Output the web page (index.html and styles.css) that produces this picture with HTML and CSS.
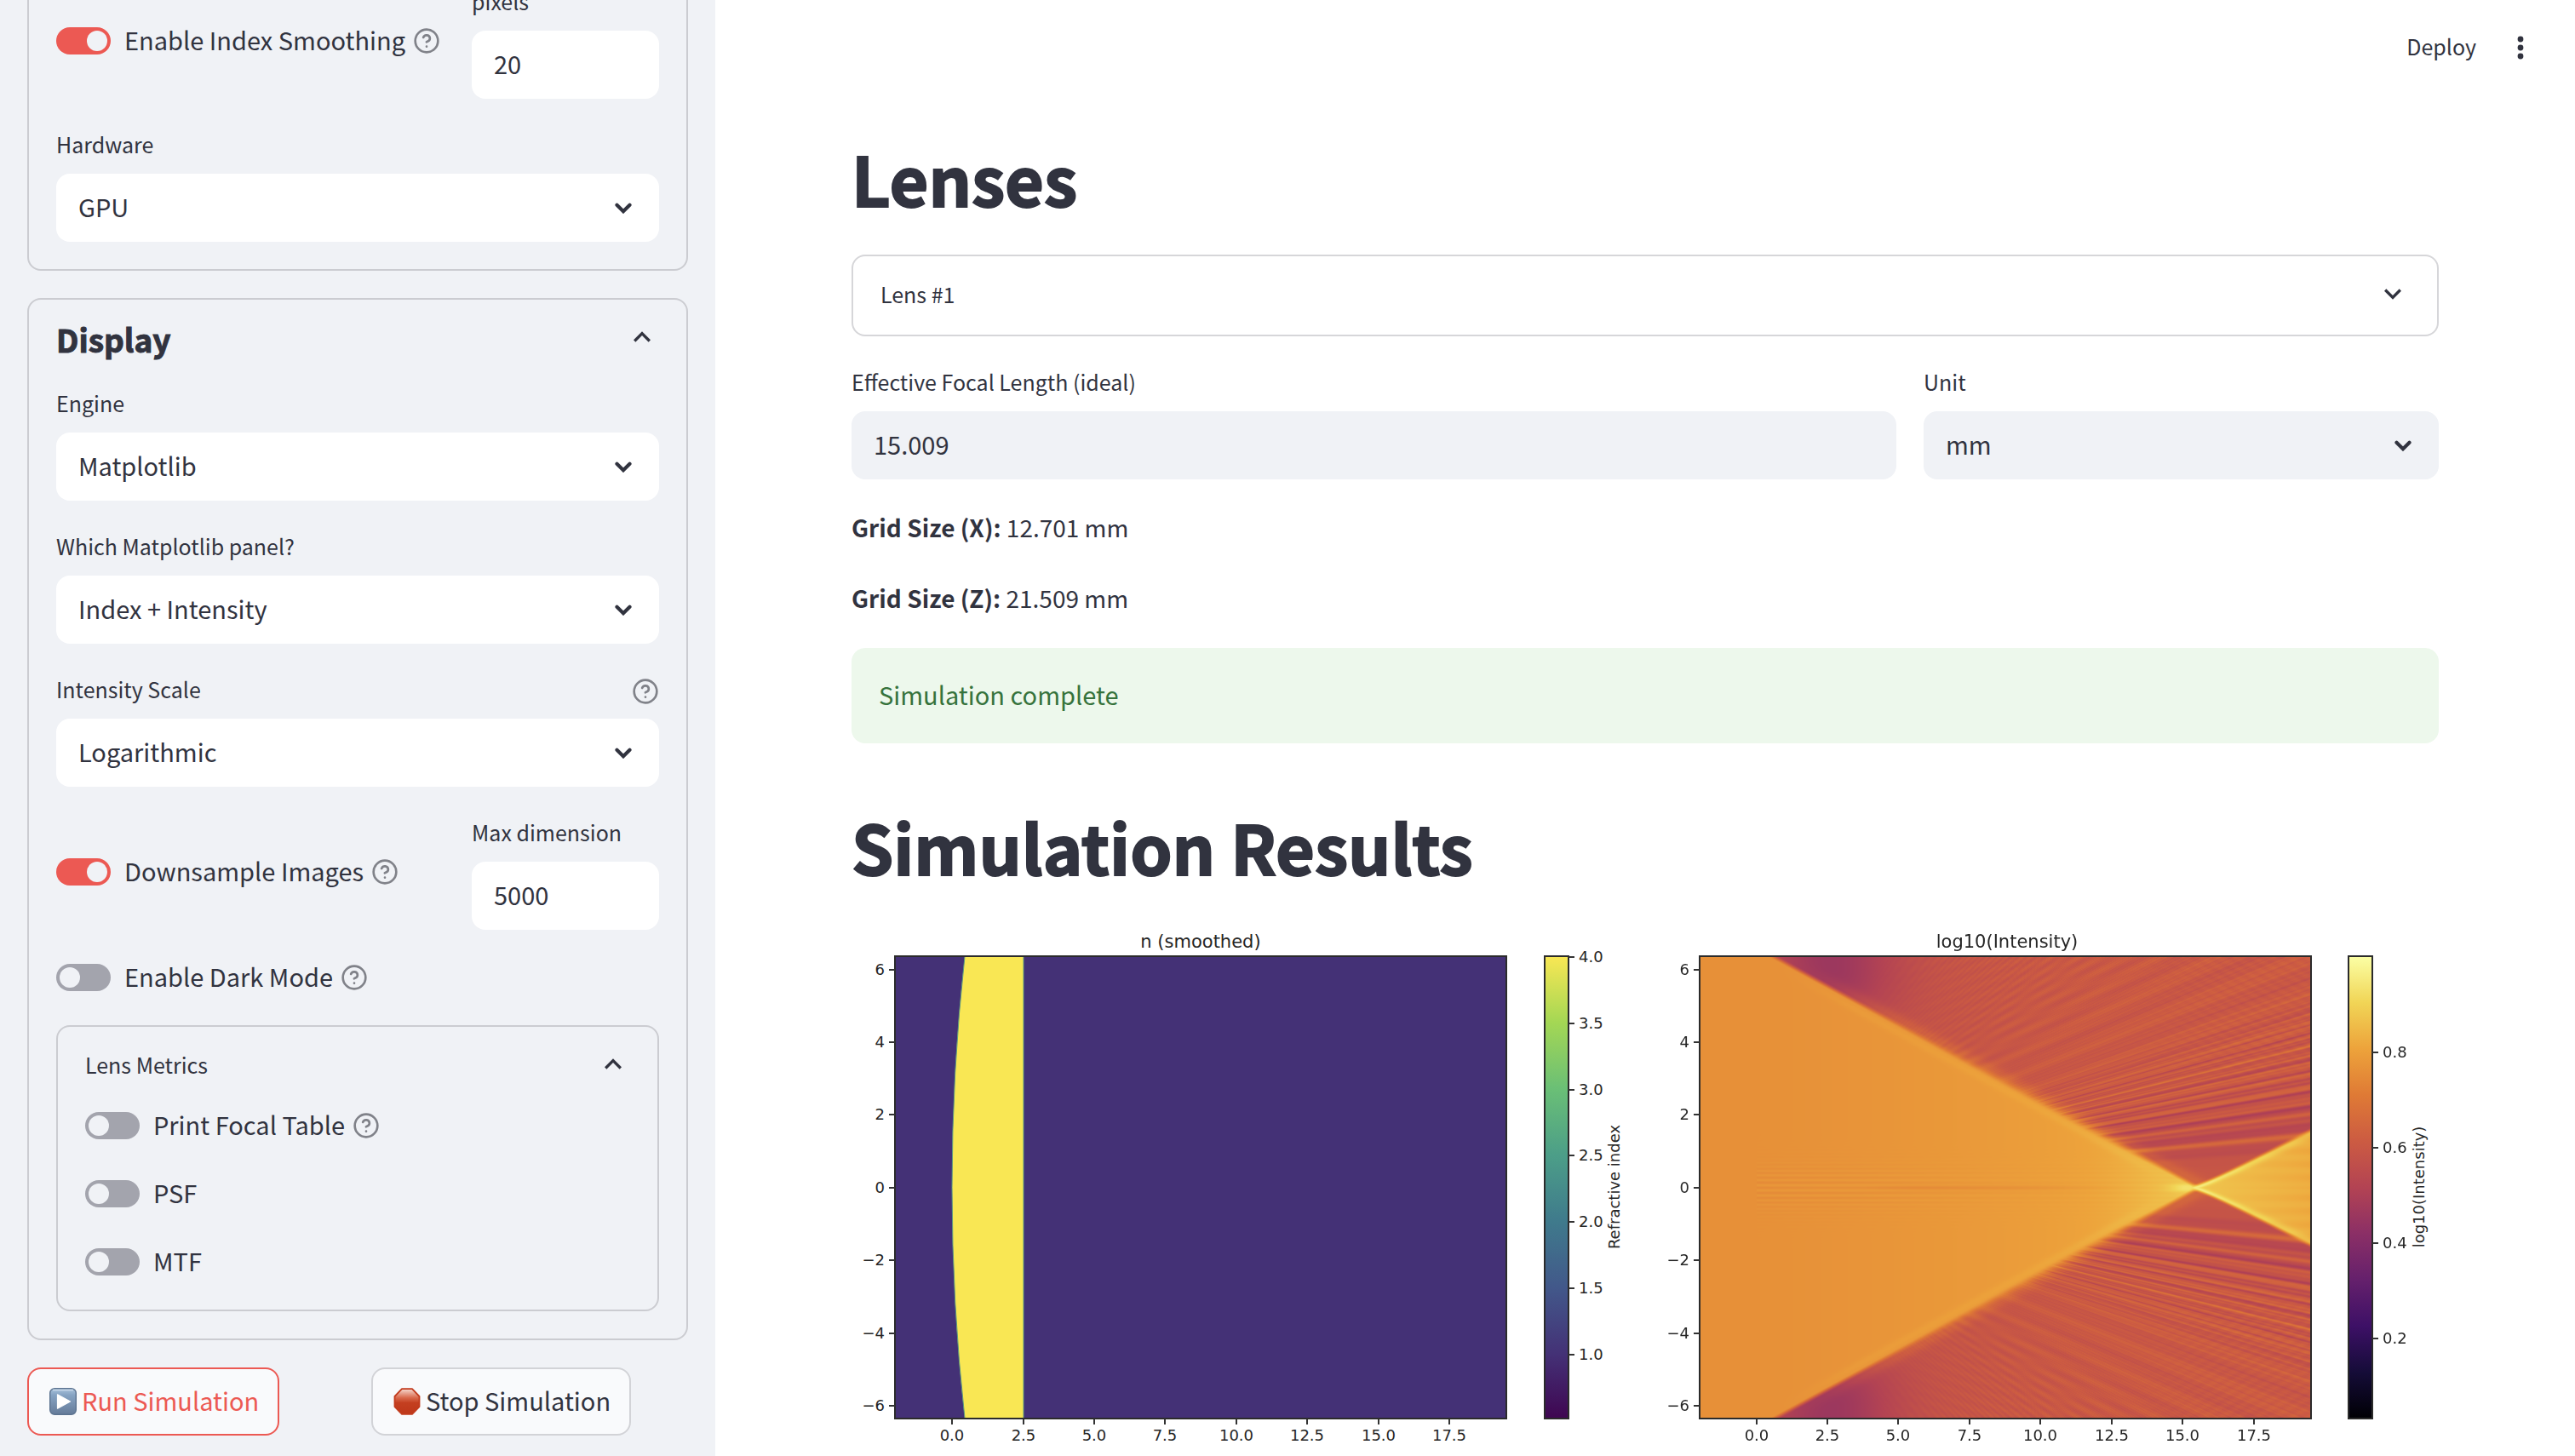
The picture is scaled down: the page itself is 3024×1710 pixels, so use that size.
FILE: index.html
```html
<!DOCTYPE html>
<html lang="en">
<head>
<meta charset="utf-8">
<title>Lens Simulation</title>
<link rel="stylesheet" href="styles.css">
</head>
<body>
<svg class="sprite" aria-hidden="true">
  <symbol id="help" viewBox="0 0 24 24"><g fill="none" stroke="#808289" stroke-width="2" stroke-linecap="round" stroke-linejoin="round"><circle cx="12" cy="12" r="10"/><path d="M9.09 9a3 3 0 0 1 5.83 1c0 2-3 3-3 3"/><path d="M12 17h.01"/></g></symbol>
  <symbol id="caret" viewBox="0 0 20 13"><path d="M2.5 2.8L10 10.2l7.500-7.400" fill="none" stroke="#31333f" stroke-width="4.200" stroke-linecap="round" stroke-linejoin="miter"/></symbol>
  <symbol id="down" viewBox="0 0 24 24"><path fill="#31333f" d="M16.590 8.590L12 13.170 7.410 8.590 6 10l6 6 6-6z"/></symbol>
  <symbol id="up" viewBox="0 0 24 24"><path fill="#31333f" d="M12 8l-6 6 1.410 1.410L12 10.830l4.590 4.580L18 14z"/></symbol>
</svg>
<div class="app">
  <aside class="sidebar">
    <section class="card">
      <div class="split">
        <div class="toggle"><input type="checkbox" id="smooth" checked><label for="smooth">Enable Index Smoothing</label><svg class="help"><use href="#help"/></svg></div>
        <div class="field"><label for="pixels">pixels</label><input class="box" type="text" id="pixels" value="20"></div>
      </div>
      <div class="field"><label for="hardware">Hardware</label>
        <div class="select"><select class="box" id="hardware"><option>GPU</option></select><svg class="caret"><use href="#caret"/></svg></div></div>
    </section>

    <section class="card">
      <button class="head head-big" type="button"><span>Display</span><svg class="chevron"><use href="#up"/></svg></button>
      <div class="field"><label for="engine">Engine</label>
        <div class="select"><select class="box" id="engine"><option>Matplotlib</option></select><svg class="caret"><use href="#caret"/></svg></div></div>
      <div class="field"><label for="panel">Which Matplotlib panel?</label>
        <div class="select"><select class="box" id="panel"><option>Index + Intensity</option></select><svg class="caret"><use href="#caret"/></svg></div></div>
      <div class="field"><div class="label-row"><label for="scale">Intensity Scale</label><svg class="help"><use href="#help"/></svg></div>
        <div class="select"><select class="box" id="scale"><option>Logarithmic</option></select><svg class="caret"><use href="#caret"/></svg></div></div>
      <div class="split">
        <div class="toggle"><input type="checkbox" id="down-images" checked><label for="down-images">Downsample Images</label><svg class="help"><use href="#help"/></svg></div>
        <div class="field"><label for="maxdim">Max dimension</label><input class="box" type="text" id="maxdim" value="5000"></div>
      </div>
      <div class="toggle"><input type="checkbox" id="dark"><label for="dark">Enable Dark Mode</label><svg class="help"><use href="#help"/></svg></div>
      <section class="card">
        <button class="head" type="button"><span>Lens Metrics</span><svg class="chevron"><use href="#up"/></svg></button>
        <div class="toggle"><input type="checkbox" id="focal"><label for="focal">Print Focal Table</label><svg class="help"><use href="#help"/></svg></div>
        <div class="toggle"><input type="checkbox" id="psf"><label for="psf">PSF</label></div>
        <div class="toggle"><input type="checkbox" id="mtf"><label for="mtf">MTF</label></div>
      </section>
    </section>

    <div class="actions">
      <div><button class="action action-run" type="button">
        <svg class="emoji" viewBox="0 0 32 32"><defs><linearGradient id="blue" x1="0" y1="0" x2="0" y2="1"><stop offset="0" stop-color="#a9c3dc"/><stop offset=".25" stop-color="#86a3c3"/><stop offset="1" stop-color="#657b99"/></linearGradient></defs><rect x=".7" y=".7" width="30.600" height="30.600" rx="5.500" fill="url(#blue)" stroke="#5c7390" stroke-width="1.400"/><path d="M4 2.500h24" stroke="#dfeaf5" stroke-width="1.500" opacity=".7"/><path d="M9.500 7.800v16.400L24.500 16z" fill="#fff" stroke="#fff" stroke-width="1.200" stroke-linejoin="round"/></svg>
        <span>Run Simulation</span></button></div>
      <div><button class="action" type="button">
        <svg class="emoji" viewBox="0 0 32 32"><defs><linearGradient id="red" x1="0" y1="0" x2="0" y2="1"><stop offset="0" stop-color="#f6d9d0"/><stop offset=".35" stop-color="#d9694c"/><stop offset=".55" stop-color="#c43f20"/><stop offset="1" stop-color="#be371a"/></linearGradient></defs><path d="M10 1.200h12L30.500 10v12L22 30.800H10L1.500 22V10z" fill="url(#red)" stroke="#c23b1d" stroke-width="1.800" stroke-linejoin="round"/></svg>
        <span>Stop Simulation</span></button></div>
    </div>
  </aside>

  <main class="main">
    <header class="topbar">
      <button class="deploy" type="button">Deploy</button>
      <button class="menu" type="button" aria-label="Menu"><svg class="dots" viewBox="0 0 8 28"><g fill="#31333f"><circle cx="4" cy="4" r="3.400"/><circle cx="4" cy="14" r="3.400"/><circle cx="4" cy="24" r="3.400"/></g></svg></button>
    </header>
    <div class="content">
      <h1>Lenses</h1>
      <section class="card card-closed"><button class="head" type="button"><span>Lens #1</span><svg class="chevron"><use href="#down"/></svg></button></section>
      <div class="lens-row">
        <div class="field"><label for="efl">Effective Focal Length (ideal)</label><input class="box" type="text" id="efl" value="15.009"></div>
        <div class="field"><label for="unit">Unit</label>
          <div class="select"><select class="box" id="unit"><option>mm</option></select><svg class="caret"><use href="#caret"/></svg></div></div>
      </div>
      <p><strong>Grid Size (X):</strong> 12.701 mm</p>
      <p><strong>Grid Size (Z):</strong> 21.509 mm</p>
      <div class="alert" role="status">Simulation complete</div>
      <h1>Simulation Results</h1>
      <svg class="figure" viewBox="0 0 1864 632">
        <defs>
          <linearGradient id="viridis" x1="0" y1="1" x2="0" y2="0"><stop offset="0" stop-color="#3f0651"/><stop offset=".139" stop-color="#443176"/><stop offset=".283" stop-color="#42588a"/><stop offset=".426" stop-color="#3f7a8c"/><stop offset=".57" stop-color="#4c9e88"/><stop offset=".713" stop-color="#6abf76"/><stop offset=".857" stop-color="#a4d754"/><stop offset="1" stop-color="#f9e754"/></linearGradient>
          <linearGradient id="inferno" x1="0" y1="1" x2="0" y2="0"><stop offset="0" stop-color="#000004"/><stop offset=".1" stop-color="#150c38"/><stop offset=".2" stop-color="#3d1066"/><stop offset=".3" stop-color="#65206c"/><stop offset=".4" stop-color="#8b2f66"/><stop offset=".5" stop-color="#b34353"/><stop offset=".6" stop-color="#cc5b42"/><stop offset=".7" stop-color="#df7a35"/><stop offset=".8" stop-color="#eda33b"/><stop offset=".9" stop-color="#f1d556"/><stop offset="1" stop-color="#fbffa5"/></linearGradient>
        </defs>

        <g class="plot">
          <rect x="51" y="44" width="718" height="543" fill="#443176"/>
          <path d="M133 44Q103 315.500 133 587H202V44z" fill="#f9e754" stroke="#5a9a80" stroke-width="1"/>
          <rect class="frame" x="51" y="44" width="718" height="543"/>
          <rect class="frame" x="814" y="44" width="28" height="543" fill="url(#viridis)"/>
          <path class="ticks" d="M118 587v7M202 587v7M285 587v7M368 587v7M452 587v7M535 587v7M619 587v7M702 587v7M51 60h-7M51 145h-7M51 230h-7M51 316h-7M51 401h-7M51 487h-7M51 572h-7M842 45h7M842 123h7M842 201h7M842 278h7M842 356h7M842 434h7M842 512h7"/>
          <text class="title" x="410" y="34">n (smoothed)</text>
          <g class="mid"><text x="118" y="613">0.0</text><text x="202" y="613">2.5</text><text x="285" y="613">5.0</text><text x="368" y="613">7.5</text><text x="452" y="613">10.0</text><text x="535" y="613">12.5</text><text x="619" y="613">15.0</text><text x="702" y="613">17.5</text></g>
          <g class="end"><text x="39" y="66">6</text><text x="39" y="151">4</text><text x="39" y="236">2</text><text x="39" y="322">0</text><text x="39" y="407">−2</text><text x="39" y="493">−4</text><text x="39" y="578">−6</text></g>
          <g><text x="854" y="51">4.0</text><text x="854" y="129">3.5</text><text x="854" y="207">3.0</text><text x="854" y="284">2.5</text><text x="854" y="362">2.0</text><text x="854" y="440">1.5</text><text x="854" y="518">1.0</text></g>
          <text class="mid" transform="translate(902 315) rotate(-90)">Refractive index</text>
        </g>

        <g class="plot">
          <foreignObject x="996" y="44" width="718" height="543"><canvas id="intensity" width="718" height="543"></canvas></foreignObject>
          <rect class="frame" x="996" y="44" width="718" height="543"/>
          <rect class="frame" x="1758" y="44" width="28" height="543" fill="url(#inferno)"/>
          <path class="ticks" d="M1063 587v7M1146 587v7M1229 587v7M1313 587v7M1396 587v7M1480 587v7M1563 587v7M1647 587v7M996 60h-7M996 145h-7M996 230h-7M996 316h-7M996 401h-7M996 487h-7M996 572h-7M1786 157h7M1786 269h7M1786 381h7M1786 493h7"/>
          <text class="title" x="1357" y="34">log10(Intensity)</text>
          <g class="mid"><text x="1063" y="613">0.0</text><text x="1146" y="613">2.5</text><text x="1229" y="613">5.0</text><text x="1313" y="613">7.5</text><text x="1396" y="613">10.0</text><text x="1480" y="613">12.5</text><text x="1563" y="613">15.0</text><text x="1647" y="613">17.5</text></g>
          <g class="end"><text x="984" y="66">6</text><text x="984" y="151">4</text><text x="984" y="236">2</text><text x="984" y="322">0</text><text x="984" y="407">−2</text><text x="984" y="493">−4</text><text x="984" y="578">−6</text></g>
          <g><text x="1798" y="163">0.8</text><text x="1798" y="275">0.6</text><text x="1798" y="387">0.4</text><text x="1798" y="499">0.2</text></g>
          <text class="mid" transform="translate(1847 315) rotate(-90)">log10(Intensity)</text>
        </g>
      </svg>
    </div>
  </main>
</div>
<script src="plot.js"></script>
</body>
</html>
```
FILE: plot.js
```js
// Paints the focused beam as a log-intensity field through the inferno map.
const stops = [[0,0,4],[21,12,56],[61,16,102],[101,32,108],[139,47,102],[179,67,83],[204,91,66],[223,122,53],[237,163,59],[241,213,86],[251,255,165]];

function color(v) {
  const t = Math.min(0.9999, Math.max(0, (v - 0.03) / 0.97)) * 10;
  const i = Math.floor(t), f = t - i;
  return stops[i].map((c, k) => c + (stops[i + 1][k] - c) * f);
}

const smooth = (a, b, x) => {
  const t = Math.min(1, Math.max(0, (x - a) / (b - a)));
  return t * t * (3 - 2 * t);
};
const bell = (x, w) => Math.exp(-(x * x) / (w * w));

function outside(x, y) {
  const th = y / (x + 0.6);
  const ph = 2 * Math.PI * 213 * th * th;
  const mask = smooth(5, 12, x) * smooth(0.03, 0.07, th);
  const fade = 1 - 0.8 * smooth(0.15, 0.3, th);
  let v = 0.603;
  v += mask * fade * (0.042 * Math.sin(ph + 1) + 0.026 * Math.sin(ph * 1.73 + 2) + 0.016 * Math.sin(ph * 2.9));
  v += 0.014 * Math.sin(230 * th + 14 * Math.sin(9 * th)) * smooth(3, 9, x) * smooth(0.1, 0.2, th);
  v += 0.009 * Math.sin(22 * (y - 0.3 * x)) * smooth(4, 8, x) * smooth(2, 4, y);
  v += 0.009 * Math.sin(24 * (y + 0.42 * x)) * smooth(12, 17, x) * smooth(2, 4, y);
  v -= 0.035 * bell(th - 0.09, 0.06) * smooth(9, 13, x);
  v -= 0.13 * bell(x - 2.5, 2.4) * smooth(3.2, 6, y);
  v -= 0.02 * bell(x - 5, 4);
  return v;
}

function inside(x, y, h) {
  const grow = Math.max(0, x) / 15;
  let v = 0.762 + 0.03 * grow * grow + 0.028 * grow;
  v += 0.045 * bell(x - 15.2, 2.4) + 0.07 * bell(x - 15.1, 0.6) * bell(y, 0.12);
  v += 0.016 * bell(h - y - 0.2, 0.13) * smooth(0.5, 4, x) * (1 - smooth(12.5, 14.5, x));
  if (x > 0) {
    const env = bell(y, 0.62) * (0.3 + 0.7 * (1 - smooth(2, 10, x)));
    v += 0.014 * env * Math.sin(40 * y + 14 * y * y - 1.3);
    v -= 0.022 * bell(y, 0.07) * smooth(3, 6, x) * (1 - smooth(9, 14, x));
  }
  return v;
}

const canvas = document.getElementById('intensity');
const ctx = canvas.getContext('2d');
const img = ctx.createImageData(canvas.width, canvas.height);
for (let j = 0; j < canvas.height; j++) {
  const y = Math.abs(271.5 - j) / 42.7;
  for (let i = 0; i < canvas.width; i++) {
    const x = (i - 66.5) / 33.4;
    const h = 6.33 * (15.5 - x) / 14.9;
    const c = x > 15.2 ? 0.39 * (x - 15.2) - 0.14 * (1 - Math.exp(-(x - 15.2) / 0.7)) : -1;
    const w = 0.07 + 0.06 * smooth(3, 11, x) * (1 - smooth(12, 15, x));
    const a = x < 15.6 ? smooth(-w * 1.8, w, h - y) : 0;
    let v = outside(x, y);
    v += 0.05 * bell(h - y + 0.15, 0.2) * smooth(1, 5, x);
    v = v * (1 - a) + inside(x, y, h) * a;
    if (c >= 0) {
      const d = c - y;
      const far = (x - 15.2) / 4.3;
      const b = smooth(-0.08 - 0.07 * far, 0.04, d);
      const core = 0.875 - 0.055 * far + 0.008 * Math.sin(y * 17) * far + (0.085 - 0.05 * far) * bell(d - 0.05, 0.05 + 0.1 * far);
      v = Math.max(v, v * (1 - b) + core * b);
    }
    const rgb = color(v), k = (j * canvas.width + i) * 4;
    img.data[k] = rgb[0]; img.data[k + 1] = rgb[1]; img.data[k + 2] = rgb[2]; img.data[k + 3] = 255;
  }
}
ctx.putImageData(img, 0, 0);
```
FILE: styles.css
```css
* { box-sizing: border-box; }
body {
  margin: 0;
  background: #fff;
  color: #31333f;
  font: 29px/48px "Noto Sans CJK SC", "Noto Sans", sans-serif;
}
button, input, select { margin: 0; font: inherit; color: inherit; }
button { background: none; border: 0; padding: 0; text-align: left; }
svg { display: block; flex: none; }
.sprite { position: absolute; width: 0; height: 0; }

.app { display: grid; grid-template-columns: 840px 1fr; min-height: 100vh; }
.sidebar {
  background: #f0f2f6;
  padding: 0 32px 24px;
  display: flex;
  flex-direction: column;
  gap: 32px;
  overflow: hidden;
}
.sidebar > .card:first-child { margin-top: -54px; padding-top: 32px; }

.card {
  border: 2px solid #cbccd1;
  border-radius: 16px;
  padding: 0 32px 32px;
  display: flex;
  flex-direction: column;
  gap: 32px;
}
.card-closed { padding-bottom: 0; border-color: #d6d6d9; }
.head {
  display: flex;
  align-items: center;
  justify-content: space-between;
  height: 92px;
  padding-bottom: 4px;
  margin-bottom: -32px;
  font-size: 25px;
}
.card-closed .head { margin-bottom: 0; }
.head-big { height: 100px; padding-bottom: 12px; font-size: 37px; font-weight: 700; -webkit-text-stroke: 1px #31333f; }
.head-big span { padding-top: 4px; }
.chevron { width: 40px; height: 40px; }

.split { display: grid; grid-template-columns: 456fr 220fr; gap: 32px; }
.split .toggle { margin-top: 44px; }
.field { display: flex; flex-direction: column; gap: 8px; min-width: 0; }
.field label { height: 48px; font-size: 25px; line-height: 42px; white-space: nowrap; }
.label-row { display: flex; justify-content: space-between; align-items: center; }
.box {
  width: 100%;
  height: 80px;
  padding: 0 26px 5px;
  border: 0;
  border-radius: 16px;
  background: #fff;
  appearance: none;
  outline: 0;
}
.select { display: grid; align-items: center; }
.select > * { grid-area: 1 / 1; }
.caret { width: 20px; height: 13px; justify-self: end; margin-right: 32px; pointer-events: none; }
.help { width: 32px; height: 32px; }

.toggle { display: flex; align-items: center; height: 48px; }
.toggle label { padding: 0 9px 4px 16px; white-space: nowrap; }
.toggle input {
  appearance: none;
  display: flex;
  flex: none;
  width: 64px;
  height: 32px;
  padding: 4px;
  border-radius: 16px;
  background: #a3a4ad;
}
.toggle input::before { content: ""; width: 24px; height: 24px; border-radius: 50%; background: #f0f2f6; }
.toggle input:checked { background: #ec5953; justify-content: flex-end; }

.actions { display: grid; grid-template-columns: 1fr 1fr; gap: 32px; }
.action {
  display: flex;
  align-items: center;
  gap: 6px;
  height: 80px;
  padding: 0 22px 0 24px;
  border: 2px solid #d2d3d7;
  border-radius: 16px;
  background: #f9fafc;
  white-space: nowrap;
}
.action span { padding-bottom: 4px; }
.action-run { border-color: #ec5953; color: #ec5953; }
.emoji { width: 32px; height: 32px; }

.main { min-width: 0; }
.topbar { height: 112px; padding-right: 60px; display: flex; justify-content: flex-end; align-items: center; gap: 48px; }
.deploy { font-size: 25px; padding-bottom: 4px; }
.dots { width: 8px; height: 28px; }
.content { padding: 44px 160px 0; display: flex; flex-direction: column; }
h1 { margin: 0 0 37px; font-size: 79px; line-height: 106px; font-weight: 700; -webkit-text-stroke: 2px #31333f; }
.lens-row { display: grid; grid-template-columns: 1227fr 605fr; gap: 32px; margin: 32px 0; }
.lens-row .box { background: #f0f2f6; }
p { margin: 0 0 32px; padding-bottom: 3px; font-size: 28px; line-height: 48px; }
strong { font-weight: 700; }
.alert {
  height: 112px;
  margin-bottom: 68px;
  padding: 30px 32px 0;
  border-radius: 16px;
  background: #edf8ec;
  color: #36733c;
}
.alert + h1 { margin-bottom: 32px; }

.figure { width: 100%; height: auto; }
.figure canvas { display: block; }
.plot { font-family: "DejaVu Sans", sans-serif; font-size: 18px; fill: #262626; }
.title { font-size: 21px; text-anchor: middle; }
.mid { text-anchor: middle; }
.end { text-anchor: end; }
.frame { stroke: #2b2b2b; stroke-width: 2; }
.frame:not([fill]) { fill: none; }
.ticks { stroke: #333; stroke-width: 2; fill: none; }
```
